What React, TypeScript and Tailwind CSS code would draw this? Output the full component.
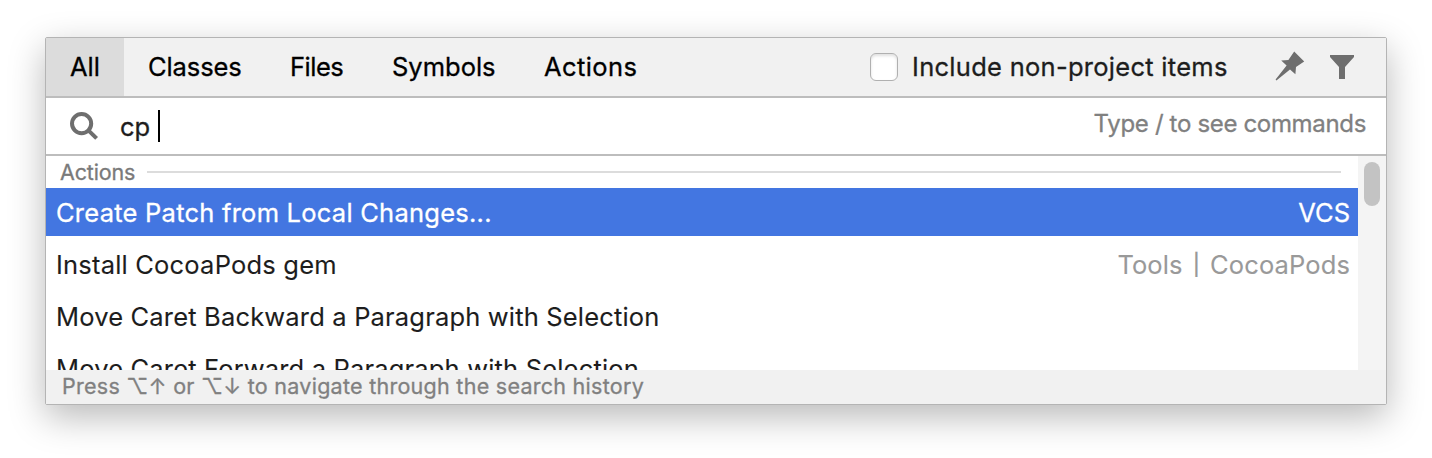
import React from "react";

const tabs = [
  { label: "All", cls: "w-[78px] pl-[24px] bg-[#dcdcdc] tracking-[-0.05px]" },
  { label: "Classes", cls: "w-[142px] pl-[24px] tracking-[-0.1px]" },
  { label: "Files", cls: "w-[102px] pl-[24px] tracking-[-0.5px]" },
  { label: "Symbols", cls: "w-[152px] pl-[24px] tracking-[0px]" },
  { label: "Actions", cls: "w-[142px] pl-[24px] tracking-[0.42px]" },
];

const rows = [
  { name: "Create Patch from Local Changes...", group: ["VCS"], cls: "tracking-[0.24px]", selected: true },
  { name: "Install CocoaPods gem", group: ["Tools", "CocoaPods"], cls: "tracking-[0.2px]", selected: false },
  { name: "Move Caret Backward a Paragraph with Selection", group: [], cls: "tracking-[0.17px]", selected: false },
  { name: "Move Caret Forward a Paragraph with Selection", group: [], cls: "tracking-[0.17px]", selected: false },
];

function PinIcon() {
  return (
    <svg width="32" height="32" viewBox="0 0 32 32" fill="#6e6e6e" className="shrink-0">
      <path d="M20.2 0.4 L30.2 10.5 L22 16 L21.4 23.2 L16 18.4 L2.4 29.4 L1.6 28.6 L12.6 14.5 L7.2 9.4 L14.4 9 Z" />
    </svg>
  );
}

function FilterIcon() {
  return (
    <svg width="24" height="24" viewBox="0 0 24 24" fill="#6e6e6e" className="shrink-0">
      <path d="M0 0 H24 V2 L15 12 V24 H9 V12 L0 2 Z" />
    </svg>
  );
}

function SearchIcon() {
  return (
    <svg width="28" height="28" viewBox="0 0 28 28" fill="none" stroke="#6e6e6e" strokeWidth="4" className="shrink-0">
      <circle cx="11.6" cy="11.6" r="9.6" />
      <path d="M17.6 17.6 L26.6 26.4" />
    </svg>
  );
}

export default function App() {
  return (
    <div className="h-[458px] w-[1432px] overflow-hidden bg-white px-[45px] pt-[37px] font-['Inter',sans-serif] text-[25.5px] font-normal whitespace-pre [-webkit-text-stroke-width:0.3px]">
      <div className="flex h-[368px] w-[1342px] flex-col rounded-[2px] border border-[#b4b4b4] bg-white shadow-[0_12px_36px_rgba(0,0,0,0.28)]">
        <div className="flex h-[60px] shrink-0 border-b-2 border-[#bdbdbd] bg-[#f1f1f1] text-black">
          {tabs.map((t) => (
            <div key={t.label} className={`flex h-[58px] shrink-0 items-center ${t.cls}`}>
              {t.label}
            </div>
          ))}
          <div className="ml-auto flex items-center pr-[32px]">
            <div className="h-[28px] w-[28px] rounded-[6px] border border-[#b0b0b0] bg-white shadow-[inset_0_2px_3px_rgba(0,0,0,0.12)]" />
            <span className="ml-[14px] w-[316px] tracking-[0.28px] text-[#1d1d1d]">Include non-project items</span>
            <div className="ml-[46px] flex items-center gap-[24px]">
              <PinIcon />
              <FilterIcon />
            </div>
          </div>
        </div>
        <div className="flex h-[58px] shrink-0 items-center border-b-2 border-[#bdbdbd] pr-[20px] pl-[24px]">
          <SearchIcon />
          <span className="ml-[22px] w-[38px] pt-[2px] text-[#1d1d1d]">cp</span>
          <div className="h-[32px] w-[2px] bg-black" />
          <span className="ml-auto pb-[4px] text-[24px] tracking-[-0.33px] text-[#808080]">Type / to see commands</span>
        </div>
        <div className="flex h-[214px] shrink-0 overflow-hidden">
          <div className="flex w-[1312px] shrink-0 flex-col gap-[4px]">
            <div className="-mb-[4px] flex h-[32px] shrink-0 items-center pr-[17px] pl-[14px] text-[21.5px] text-[#7a7a7a]">
              <span className="w-[87px] tracking-[-0.15px]">Actions</span>
              <div className="h-[2px] flex-1 bg-[#dcdcdc]" />
            </div>
            {rows.map((r) => (
              <div
                key={r.name}
                className={`flex h-[48px] shrink-0 items-center justify-between pt-[2px] pr-[8px] pl-[10px] ${
                  r.selected ? "bg-[#4376e1] text-white" : "text-[#1d1d1d] [-webkit-text-stroke-width:0.1px]"
                }`}
              >
                <span className={r.cls}>{r.name}</span>
                <span className={`flex items-center gap-[10px] ${r.selected ? "text-white" : "tracking-[0.12px] text-[#999999]"}`}>
                  {r.group.map((g, i) => (
                    <React.Fragment key={g}>
                      {i > 0 && <span className="text-[21px] font-medium">|</span>}
                      <span>{g}</span>
                    </React.Fragment>
                  ))}
                </span>
              </div>
            ))}
          </div>
          <div className="flex w-[28px] shrink-0 justify-center bg-[#f4f4f4] pt-[6px]">
            <div className="h-[44px] w-[16px] rounded-full bg-[#c3c3c3]" />
          </div>
        </div>
        <div className="flex h-[34px] shrink-0 items-center bg-[#f1f1f1] pb-[2px] pl-[16px] text-[21.5px] tracking-[0.27px] text-[#808080]">
          Press ⌥↑ or ⌥↓ to navigate through the search history
        </div>
      </div>
    </div>
  );
}
